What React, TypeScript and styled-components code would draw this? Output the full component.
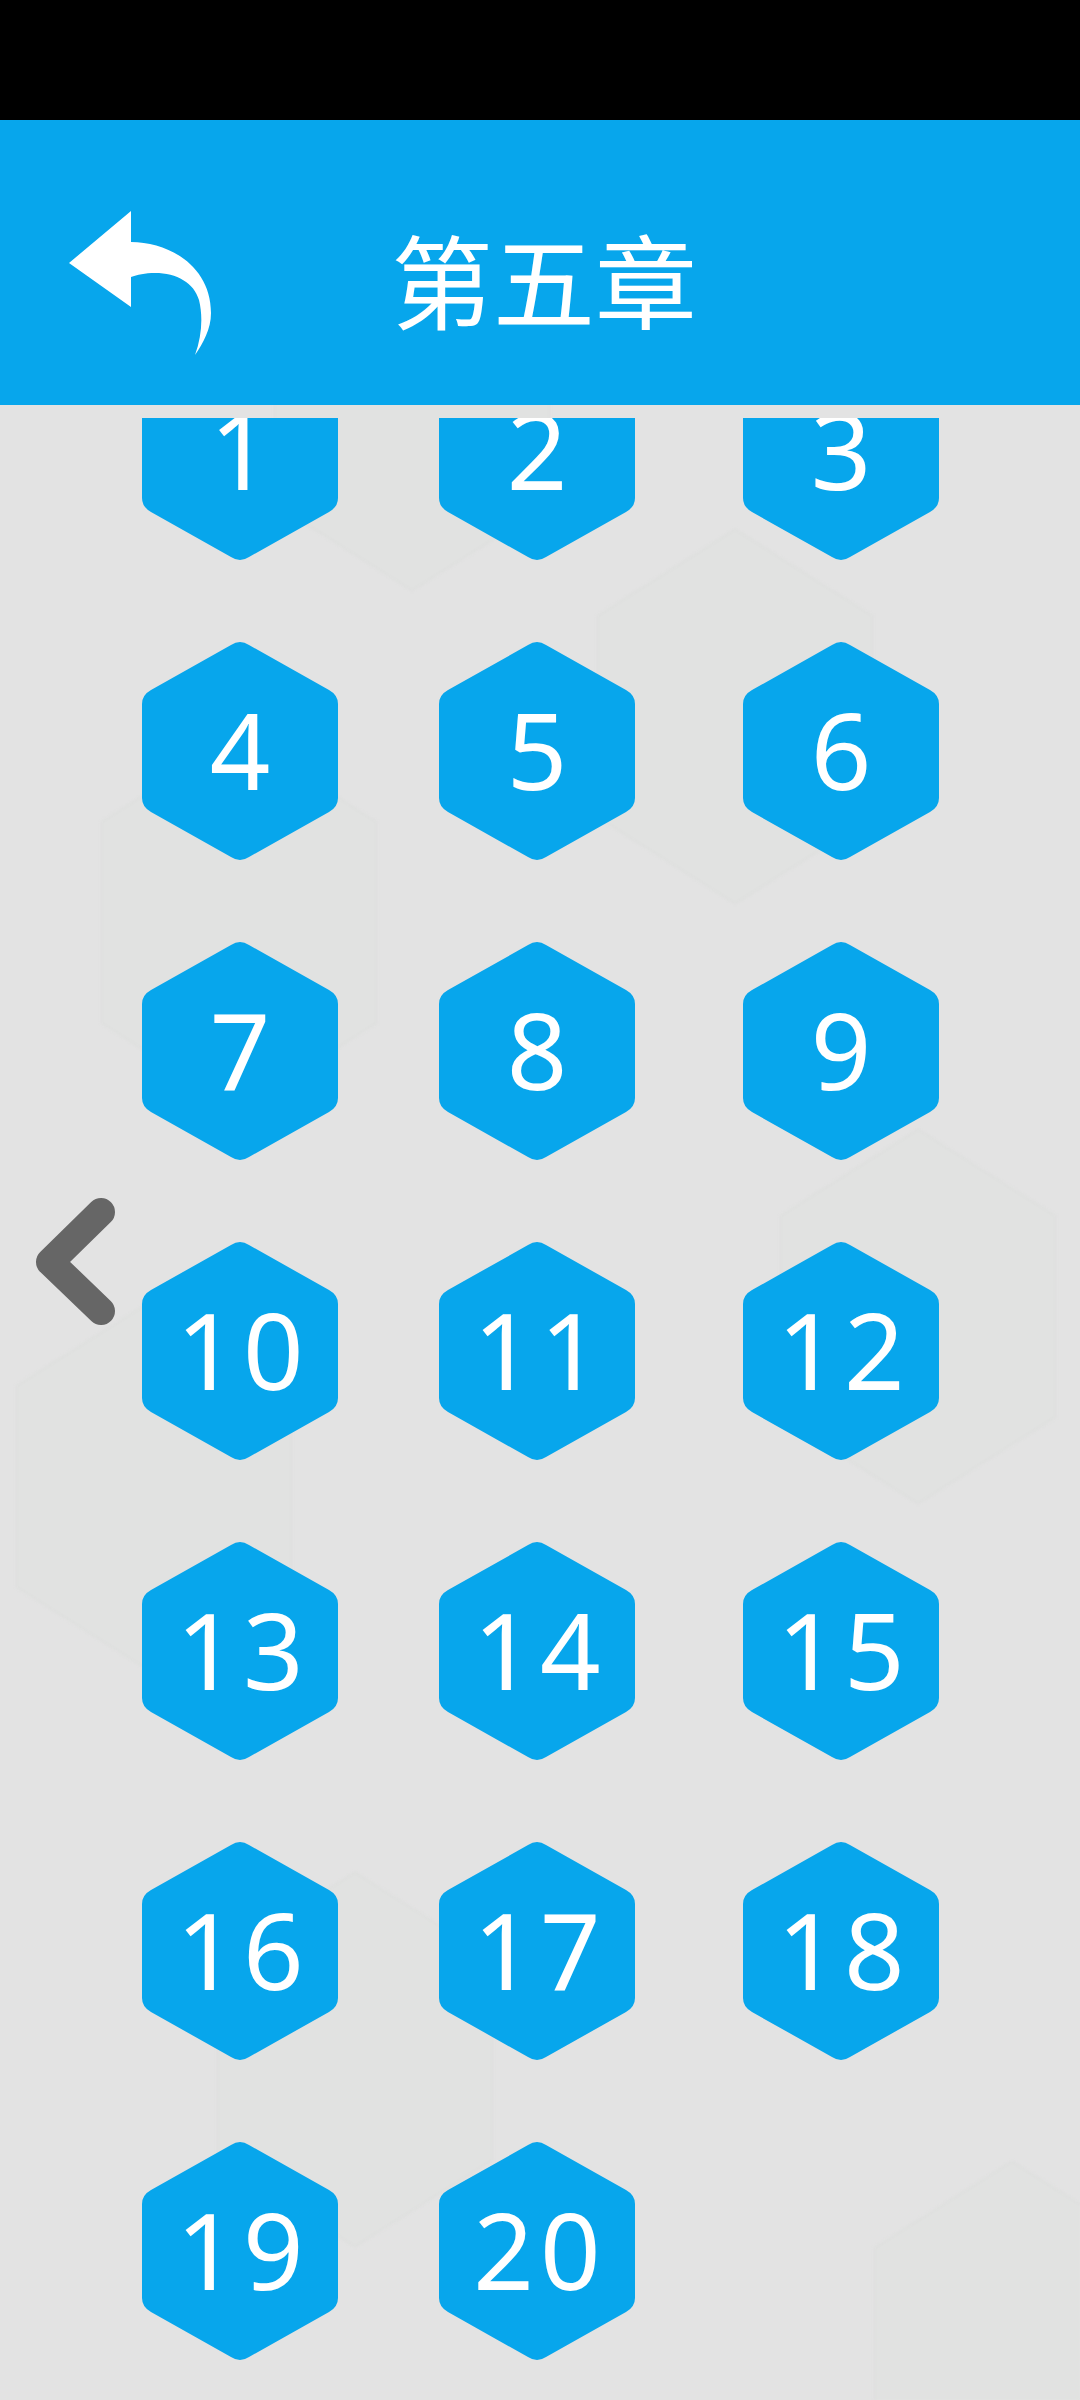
import { createGlobalStyle, styled } from "styled-components";

const BLUE = "#07a6ec";

const GlobalStyle = createGlobalStyle`
  html, body {
    margin: 0;
    padding: 0;
    background: #e3e3e3;
  }
`;

const Page = styled.div`
  position: relative;
  display: flex;
  flex-direction: column;
  width: 1080px;
  height: 2400px;
  overflow: hidden;
  background: #e3e3e3;
  font-family: "Noto Sans", "Noto Sans CJK SC", sans-serif;
`;

const StatusBar = styled.div`
  flex: 0 0 120px;
  background: #000;
`;

const Header = styled.header`
  position: relative;
  z-index: 1;
  flex: 0 0 285px;
  display: flex;
  align-items: flex-start;
  padding-left: 69px;
  background: ${BLUE};
`;

const BackIcon = styled.svg`
  flex: none;
  width: 142px;
  height: 144px;
  margin-top: 91px;
`;

const Title = styled.h1`
  margin: 107px 0 0 180px;
  color: #fff;
  font-family: "Noto Sans CJK SC", sans-serif;
  font-size: 102px;
  font-weight: 400;
  line-height: 1;
`;

const Backdrop = styled.svg`
  position: absolute;
  inset: 0;
  width: 1080px;
  height: 2400px;
  filter: blur(1px);
`;

const ScrollArea = styled.main`
  position: relative;
  flex: 1;
  margin-top: 13px;
  overflow: hidden;
`;

const Levels = styled.div`
  display: grid;
  grid-template-columns: 297px 304px 196px;
  grid-auto-rows: 218px;
  row-gap: 82px;
  margin-top: -76px;
  padding-left: 142px;
`;

const Level = styled.div`
  display: grid;
  width: 196px;
  height: 218px;

  > * {
    grid-area: 1 / 1;
  }
`;

const HexShape = styled.svg`
  width: 196px;
  height: 218px;
`;

const LevelNumber = styled.span`
  z-index: 1;
  align-self: center;
  justify-self: center;
  padding: 0 0 4px 6px;
  color: #fff;
  font-size: 106px;
  letter-spacing: 6px;
  line-height: 1;
`;

const PrevArrow = styled.svg`
  position: absolute;
  left: 30px;
  top: 1192px;
  width: 90px;
  height: 140px;
`;

const FAINT_HEXES = [
  [412, 217],
  [735, 530],
  [239, 736],
  [918, 1130],
  [154, 1300],
  [355, 1873],
  [1012, 2162],
];

const hexPoints = (cx: number, top: number) =>
  [
    [cx, top],
    [cx + 137, top + 86],
    [cx + 137, top + 287],
    [cx, top + 373],
    [cx - 137, top + 287],
    [cx - 137, top + 86],
  ]
    .map((p) => p.join(","))
    .join(" ");

const levels = Array.from({ length: 20 }, (_, i) => i + 1);

export default function App() {
  return (
    <Page>
      <GlobalStyle />
      <Backdrop viewBox="0 0 1080 2400">
        {FAINT_HEXES.map(([cx, top]) => (
          <polygon
            key={cx}
            points={hexPoints(cx, top)}
            fill="#e1e2e1"
            stroke="#dfe0df"
            strokeWidth="3"
            strokeLinejoin="round"
          />
        ))}
      </Backdrop>
      <StatusBar />
      <Header>
        <BackIcon viewBox="0 0 142 144">
          <path
            d="M0 52 L62 0 L62 31 C100 31 142 55 142 102 C142 118 134 132 126 144 C133 125 134 105 130 89 C125 72 108 62 86 62 C76 62 68 64 62 66 L62 96 Z"
            fill="#fff"
          />
        </BackIcon>
        <Title>第五章</Title>
      </Header>
      <ScrollArea>
        <Levels>
          {levels.map((n) => (
            <Level key={n}>
              <HexShape viewBox="0 0 196 218">
                <path
                  d="M89 3 Q98 -3 107 3 L187 48 Q196 53 196 62 L196 156 Q196 165 187 170 L107 215 Q98 221 89 215 L9 170 Q0 165 0 156 L0 62 Q0 53 9 48 Z"
                  fill={BLUE}
                />
              </HexShape>
              <LevelNumber>{n}</LevelNumber>
            </Level>
          ))}
        </Levels>
      </ScrollArea>
      <PrevArrow viewBox="0 0 90 140">
        <path
          d="M71 20 L20 70 L71 119"
          fill="none"
          stroke="#666"
          strokeWidth="28"
          strokeLinecap="round"
          strokeLinejoin="round"
        />
      </PrevArrow>
    </Page>
  );
}
